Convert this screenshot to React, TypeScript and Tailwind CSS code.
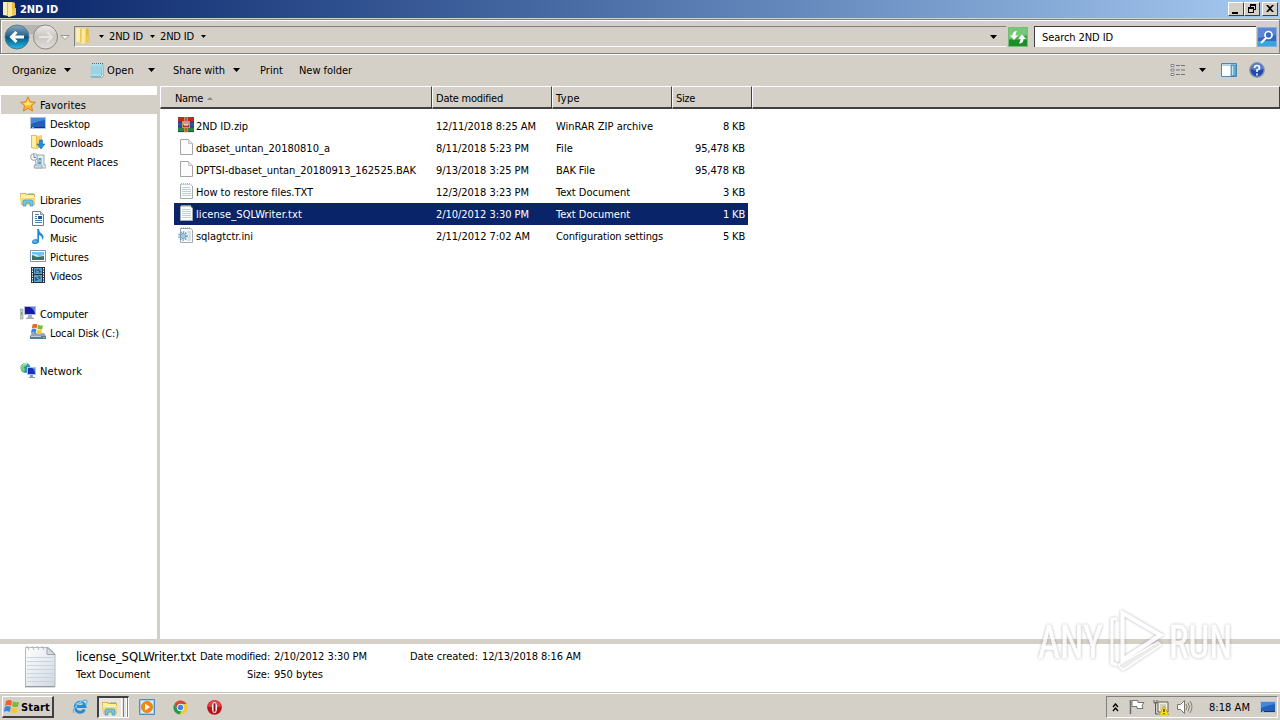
import { useLayoutEffect, useRef, useState } from "react";
import type { ReactNode } from "react";
import clsx from "clsx";

type TextProps = {
  w: number;
  children: string;
  className?: string;
};

// Spreads the letters so that the label takes exactly w pixels
function Text({ w, children, className }: TextProps) {
  const ref = useRef<HTMLSpanElement>(null);
  const [spacing, setSpacing] = useState(0);

  useLayoutEffect(() => {
    if (!ref.current) return;
    const natural = ref.current.getBoundingClientRect().width;
    setSpacing((w - natural) / children.length);
  }, [w, children]);

  return (
    <span
      ref={ref}
      className={clsx("inline-block shrink-0 pt-0.5 whitespace-pre", className)}
      style={{ letterSpacing: `${spacing}px` }}
    >
      {children}
    </span>
  );
}

function Icon({ children, className = "h-4 w-4" }: { children: ReactNode; className?: string }) {
  return (
    <svg viewBox="0 0 16 16" className={clsx("block shrink-0", className)}>
      {children}
    </svg>
  );
}

function Arrow({ className }: { className?: string }) {
  return (
    <svg viewBox="0 0 7 4" className={clsx("block h-1 w-[7px] shrink-0", className)}>
      <path d="M0 0h7L3.5 4z" fill="#000" />
    </svg>
  );
}

function SmallArrow({ className }: { className?: string }) {
  return (
    <svg viewBox="0 0 5 3" className={clsx("block h-[3px] w-[5px] shrink-0", className)}>
      <path d="M0 0h5L2.5 3z" fill="#000" />
    </svg>
  );
}

function FolderIcon({ className }: { className?: string }) {
  return (
    <Icon className={className}>
      <path d="M1 1h7l1 1v12l-3 1-5-1z" fill="#f3d774" />
      <path d="M1 1h4v13H1z" fill="#fbeeb0" />
      <path d="M6 2l5-1 2 1v12l-6 2z" fill="#e6bb45" />
      <path d="M6 2l4-1v14l-4 1z" fill="#fdeb9c" />
      <path d="M10 8l4-1v7l-4 1z" fill="#edc958" />
      <path d="M5.500 2v12" stroke="#caa445" strokeWidth=".6" />
    </Icon>
  );
}

function NotepadIcon() {
  return (
    <Icon>
      <path d="M3 2h11v11l-2 2H1.500z" fill="#75b8cf" />
      <path d="M3 2h10l-1 12H1.500z" fill="#a9deed" />
      <path d="M2.500 5h10M2.300 7h10M2 9h10M2 11h10" stroke="#76b7cf" strokeWidth=".5" />
      <path d="M3 1.500h11" stroke="#536c75" strokeDasharray="1 1" />
      <path d="M14 3v10l-2 2" stroke="#f5faff" fill="none" />
      <path d="M14.500 3v11l-1 1.500H2" stroke="#8b9a9e" strokeWidth=".6" fill="none" />
    </Icon>
  );
}

function StarIcon() {
  return (
    <Icon>
      <path
        d="M8 .8l2.200 4.900 5.200.6-3.900 3.500 1.100 5.300L8 12.400l-4.600 2.700 1.100-5.300L.6 6.300l5.200-.6z"
        fill="#fbb62c"
        stroke="#d97c20"
        strokeWidth=".9"
      />
      <path d="M8 3l1.500 3.700 3.500.5-3 1.800-4 .5-3-2.300 3.500-.5z" fill="#ffe573" />
    </Icon>
  );
}

function DesktopIcon() {
  return (
    <Icon>
      <path d="M0 2h16v12H0z" fill="#b1c4dc" />
      <path d="M1 3h14v10H1z" fill="#2361b8" />
      <path d="M1 3h14v2Q8 6 1 9z" fill="#4488d8" />
      <path d="M1 12h14v1H1z" fill="#17355e" />
      <path d="M2 12h2v1H2z" fill="#65cc6a" />
    </Icon>
  );
}

function DownloadsIcon() {
  return (
    <Icon>
      <path d="M1 1h5l2 1v11l-2 2-5-1z" fill="#e6bd4e" />
      <path d="M2 2h4v12l-4-1z" fill="#fff0a7" />
      <path d="M7 2l5-1v12l-5 2z" fill="#f2d26b" />
      <path d="M9.500 6h3v4h2.500l-4 5-4-5h2.500z" fill="#258edb" stroke="#1668ab" strokeWidth=".6" />
    </Icon>
  );
}

function RecentIcon() {
  return (
    <Icon>
      <path d="M5 2h9v10h2v3H5v-3h1z" fill="#e5eff4" stroke="#84949d" strokeWidth=".8" />
      <path d="M7 6h5M7 8h5M7 10h5" stroke="#6998ba" />
      <path d="M9 5h2v2H9zM8 9h3v2H8z" fill="#5ca2d0" />
      <circle cx="4" cy="4" r="3.400" fill="#edf4f7" stroke="#8294a0" strokeWidth=".8" />
      <path d="M4 1.500V4.500h2" stroke="#577080" fill="none" strokeWidth=".8" />
      <path d="M4 12h8v3H4z" fill="#ccd9df" stroke="#84949d" strokeWidth=".6" />
    </Icon>
  );
}

function LibrariesIcon({ className }: { className?: string }) {
  return (
    <Icon className={className}>
      <path d="M0 2h6l1 1h8v11H1z" fill="#d9b44b" />
      <path d="M1 3h4l1 1h8v5H1z" fill="#fff0a0" />
      <path d="M8 3h6" stroke="#6eab70" />
      <path d="M.5 6h15l-1 8h-13z" fill="#f5d978" />
      <path d="M1 6.500h14" stroke="#fff3bd" />
      <path d="M3 15v-4q0-2 2-2h6q2 0 2 2v4h-3v-3H6v3z" fill="#72c6e9" stroke="#3e94c1" strokeWidth=".7" />
    </Icon>
  );
}

function DocumentsIcon() {
  return (
    <Icon>
      <path d="M2.500 1.500h8l3 3v11h-11z" fill="#fff" stroke="#6b7c8e" />
      <path d="M10.500 1.500v3h3" fill="#d2dfed" stroke="#6b7c8e" strokeWidth=".8" />
      <path d="M5 4.500h4M5 6.500h2M5 8.500h2M5 10.500h7M5 12.500h7" stroke="#4d80b4" />
      <path d="M8 6h4v3H8z" fill="#29578c" />
    </Icon>
  );
}

function MusicIcon() {
  return (
    <Icon>
      <path d="M7 0h2q0 3 3 5 3 3 0 6 .5-4-3-5v6q0 3-4 3-3 0-3-2 0-3 5-3z" fill="#2289d1" />
      <path d="M7.500 1v10" stroke="#78c6f0" strokeWidth=".7" />
      <ellipse cx="5" cy="12.500" rx="2" ry="1.300" fill="#65bbeb" />
    </Icon>
  );
}

function PicturesIcon() {
  return (
    <Icon>
      <path d="M.5 2.500h15v11H.5z" fill="#fff" stroke="#8097ab" />
      <path d="M2 4h12v8H2z" fill="#70c3ed" />
      <path d="M2 6q5 0 7 2l5-1v2H2z" fill="#c9e8f1" />
      <path d="M2 7l5 2 7-1v4H2z" fill="#34775f" />
      <path d="M2 11h12v1H2z" fill="#2c709e" />
    </Icon>
  );
}

function VideosIcon() {
  return (
    <Icon>
      <path d="M1 0h14v16H1z" fill="#27323e" />
      <path d="M2.500 1v14M13.500 1v14" stroke="#eef5f8" strokeDasharray="1.500 1" />
      <path d="M4 1h8v6H4zM4 8h8v7H4z" fill="#4da2d5" />
      <path d="M5 2l2 1 2-1 2 3-2 1-2-1-2 1zM5 10l2 1 2-2 2 2-3 2-3 1z" fill="#285985" />
      <path d="M6 4l3 1M7 11l2 1" stroke="#d69562" />
    </Icon>
  );
}

function ComputerIcon() {
  return (
    <Icon>
      <path d="M0 4h3v10H0z" fill="#c0cec7" stroke="#77897c" strokeWidth=".5" />
      <path d="M1 7h1v3H1z" fill="#64ba51" />
      <path d="M4 1h12v9H4z" fill="#b8bed1" />
      <path d="M5 2h10v7H5z" fill="#1519a3" />
      <path d="M10 2h5v7q-1-5-5-7z" fill="#6482df" />
      <path d="M8 10h4v2l2 1v1H6v-1l2-1z" fill="#a5adbc" />
    </Icon>
  );
}

function WindowsFlag() {
  return (
    <g>
      <path d="M2 2q3-2 6 0L7 7Q4 5 1 7z" fill="#ef6229" />
      <path d="M9 2.300q3 1.700 6 .4l-1 5q-3 1-6-.5z" fill="#7fba36" />
      <path d="M.8 8q3-2 6 0l-1 5q-3-2-6-.2z" fill="#3986dc" />
      <path d="M7.800 8.300q3 1.500 6 .4l-1 5q-3 1-6-.5z" fill="#fac732" />
    </g>
  );
}

function DiskIcon() {
  return (
    <Icon>
      <path d="M2 9h12l2 3v3H0v-3z" fill="#8ea6b5" />
      <path d="M0 12h16v3H0z" fill="#587d92" />
      <path d="M1 12h10v1H1z" fill="#b9d0d8" />
      <path d="M13 13h2v1h-2z" fill="#66d35a" />
      <g transform="translate(1 -1) scale(.8)">
        <WindowsFlag />
      </g>
    </Icon>
  );
}

function NetworkIcon() {
  return (
    <Icon>
      <circle cx="5.500" cy="6" r="5" fill="#2b91ba" />
      <path d="M1 4q3-4 7-3L6 4 4 5l1 3-2 2Q0 7 1 4z" fill="#7bd26b" />
      <path d="M3 3q2-2 4-1" stroke="#d3f2f4" fill="none" />
      <path d="M7 5h9v8H7z" fill="#b2c2df" />
      <path d="M8 6h7v6H8z" fill="#1930b8" />
      <path d="M12 6h3v6q0-4-3-6z" fill="#658ee8" />
      <path d="M10 13h3v2h2v1H9v-1h1z" fill="#849ab6" />
    </Icon>
  );
}

function RarIcon() {
  return (
    <Icon>
      <path d="M0 0h16v5H0z" fill="#bd272f" />
      <path d="M0 5h16v5H0z" fill="#3054a5" />
      <path d="M0 10h16v5H0z" fill="#298342" />
      <path d="M0 5h16M0 10h16M0 14.700h16" stroke="#1b2631" strokeWidth=".6" />
      <path d="M6 0h4v15H6z" fill="#ad6528" />
      <path d="M6.500 0v15M9.500 0v15" stroke="#d99a45" strokeWidth=".7" />
      <path d="M4 4h8v7H4z" fill="#c29b62" />
      <path d="M5 5h6v5H5z" fill="#b32937" />
      <path d="M6 5v3h4V5M8 5v3" stroke="#fff" fill="none" />
    </Icon>
  );
}

function BlankIcon() {
  return (
    <Icon>
      <path d="M2.500.5h8l4 4v11h-12z" fill="#fcfcfc" stroke="#a2a4a4" />
      <path d="M10.500.5v4h4" fill="#e2e7e9" stroke="#b5b9ba" strokeWidth=".8" />
    </Icon>
  );
}

function TextFileIcon() {
  return (
    <Icon>
      <path d="M2.500 1.500h10L14.500 3v12.500h-12z" fill="#fbfdfd" stroke="#a2aaad" />
      <path d="M3 1h10" stroke="#fff" />
      <path d="M3 .8h10" stroke="#8a9498" strokeDasharray="1 1" />
      <path d="M4 4.500h8M4 6.500h9M4 8.500h9M4 10.500h9M4 12.500h9" stroke="#c0d0d6" />
    </Icon>
  );
}

function IniIcon() {
  return (
    <Icon>
      <path d="M2.500 1.500h10L14.500 3v12.500h-12z" fill="#fbfdfd" stroke="#a2aaad" />
      <path d="M3 1h10" stroke="#848b8e" strokeDasharray="1 1" />
      <path d="M9 5h4M10 7h3M11 9h2M10 11h3M9 13h4" stroke="#b4c7ce" />
      <circle cx="5" cy="9" r="4" fill="none" stroke="#5d99c4" strokeWidth="1.500" strokeDasharray="1.500 1.100" />
      <circle cx="5" cy="9" r="2.500" fill="#c4e0f1" stroke="#609bc3" />
      <circle cx="5" cy="9" r="1" fill="#fff" stroke="#557da0" strokeWidth=".5" />
    </Icon>
  );
}

const places = [
  { name: "Favorites", w: 46, icon: <StarIcon />, root: true, active: true },
  { name: "Desktop", w: 40, icon: <DesktopIcon /> },
  { name: "Downloads", w: 53, icon: <DownloadsIcon /> },
  { name: "Recent Places", w: 68, icon: <RecentIcon /> },
  null,
  { name: "Libraries", w: 41, icon: <LibrariesIcon />, root: true },
  { name: "Documents", w: 54, icon: <DocumentsIcon /> },
  { name: "Music", w: 27, icon: <MusicIcon /> },
  { name: "Pictures", w: 39, icon: <PicturesIcon /> },
  { name: "Videos", w: 32, icon: <VideosIcon /> },
  null,
  { name: "Computer", w: 48, icon: <ComputerIcon />, root: true },
  { name: "Local Disk (C:)", w: 69, icon: <DiskIcon /> },
  null,
  { name: "Network", w: 42, icon: <NetworkIcon />, root: true },
];

const files = [
  { name: "2ND ID.zip", nw: 52, date: "12/11/2018 8:25 AM", dw: 100, type: "WinRAR ZIP archive", tw: 97, size: "8 KB", sw: 22, icon: <RarIcon /> },
  { name: "dbaset_untan_20180810_a", nw: 134, date: "8/11/2018 5:23 PM", dw: 93, type: "File", tw: 17, size: "95,478 KB", sw: 50, icon: <BlankIcon /> },
  { name: "DPTSI-dbaset_untan_20180913_162525.BAK", nw: 220, date: "9/13/2018 3:25 PM", dw: 93, type: "BAK File", tw: 39, size: "95,478 KB", sw: 50, icon: <BlankIcon /> },
  { name: "How to restore files.TXT", nw: 117, date: "12/3/2018 3:23 PM", dw: 93, type: "Text Document", tw: 74, size: "3 KB", sw: 22, icon: <TextFileIcon /> },
  { name: "license_SQLWriter.txt", nw: 106, date: "2/10/2012 3:30 PM", dw: 93, type: "Text Document", tw: 74, size: "1 KB", sw: 22, icon: <TextFileIcon />, selected: true },
  { name: "sqlagtctr.ini", nw: 57, date: "2/11/2012 7:02 AM", dw: 94, type: "Configuration settings", tw: 107, size: "5 KB", sw: 22, icon: <IniIcon /> },
];

function CaptionButton({ children }: { children: ReactNode }) {
  return (
    <div className="h-[14px] w-4 border border-t-white border-l-white border-r-[#404040] border-b-[#404040] bg-[#d4d0c8]">
      <svg viewBox="0 0 14 12" className="block h-3 w-3.5" shapeRendering="crispEdges">
        {children}
      </svg>
    </div>
  );
}

function TitleBar() {
  return (
    <div className="flex h-[18px] items-center bg-linear-to-r from-[#0a246a] to-[#a6caf0] pr-0.5 pl-0.5">
      <FolderIcon />
      <Text w={38} className="ml-0.5 font-bold text-white">2ND ID</Text>
      <div className="ml-auto flex">
        <CaptionButton>
          <path d="M3 9h6v2H3z" />
        </CaptionButton>
        <CaptionButton>
          <path d="M5 1h6v2H5zM5 3h1v2H5zM10 3h1v4h-1zM8 6h2v1H8zM3 4h6v2H3zM3 6h1v4H3zM8 6h1v4H8zM3 9h6v1H3z" />
        </CaptionButton>
        <div className="ml-0.5">
          <CaptionButton>
            <path d="M3 2h2l2 2 2-2h2L8 5.500 11 9H9L7 7 5 9H3l3-3.500z" shapeRendering="auto" />
          </CaptionButton>
        </div>
      </div>
    </div>
  );
}

function NavButtons() {
  return (
    <svg viewBox="0 0 68 28" className="block h-7 w-[68px] shrink-0">
      <defs>
        <linearGradient id="back" x2="0" y2="1">
          <stop stopColor="#8ca9ba" />
          <stop offset=".45" stopColor="#246790" />
          <stop offset=".5" stopColor="#07517e" />
          <stop offset="1" stopColor="#20bee9" />
        </linearGradient>
        <linearGradient id="forward" x2="0" y2="1">
          <stop stopColor="#eceae7" />
          <stop offset=".5" stopColor="#c9c5c1" />
          <stop offset="1" stopColor="#e3dfda" />
        </linearGradient>
      </defs>
      <path d="M14 2h32v5q-16 9-32 0z" fill="#b6b5b2" />
      <circle cx="15" cy="14" r="12" fill="url(#back)" stroke="#55788d" />
      <path d="M9 14h13M14.500 9l-5 5 5 5" stroke="#fff" strokeWidth="3" fill="none" />
      <circle cx="43.500" cy="14" r="12" fill="url(#forward)" stroke="#8c8a87" />
      <path d="M37 14h13M45 9l5 5-5 5" stroke="#e8e5e1" strokeWidth="2" fill="none" />
      <path d="M59 12.500h8L63 16.500z" fill="#f8f8f8" stroke="#898782" strokeWidth=".8" />
    </svg>
  );
}

function AddressBar() {
  return (
    <div className="mt-px flex h-[35px] items-center border border-[#808080] bg-[#d4d0c8] pl-px shadow-[inset_1px_1px_0_#fff]">
      <NavButtons />
      <div className="ml-1 flex h-[21px] w-[932px] items-center border-t border-b border-l border-t-[#808080] border-b-white border-l-[#808080]">
        <FolderIcon className="-mt-0.5 h-[17px] w-[17px]" />
        <SmallArrow className="ml-[7px]" />
        <Text w={34} className="-mt-0.5 ml-[5px]">2ND ID</Text>
        <SmallArrow className="ml-[7px]" />
        <Text w={34} className="-mt-0.5 ml-[5px]">2ND ID</Text>
        <SmallArrow className="ml-[7px]" />
        <Arrow className="mr-[9px] ml-auto" />
      </div>
      <svg viewBox="0 0 20 20" className="ml-0.5 block h-5 w-5 shrink-0">
        <path d="M.5.5h19v19H.5z" fill="#43a748" stroke="#75bd78" />
        <path d="M1 1h18v7L1 12z" fill="#74c878" />
        <path d="M1 13h18v6H1z" fill="#1d8d26" />
        <path d="M9 4Q4.500 4 4.500 8.500H2L6 13l4-4.500H7.500Q7.500 6 9 4z" fill="#fff" />
        <path d="M11 16.500q4.500 0 4.500-4.500H18l-4-4.500L10 12h2.500q0 2.500-1.500 4.500z" fill="#fff" />
      </svg>
      <div className="ml-1.5 flex h-[21px] w-[222px] items-center border-t border-l border-[#404040] bg-white pl-[7px]">
        <Text w={71}>Search 2ND ID</Text>
      </div>
      <svg viewBox="0 0 20 20" className="ml-px block h-5 w-5 shrink-0">
        <path d="M.5.5h19v19H.5z" fill="#3864c4" stroke="#8aa9df" />
        <path d="M1 1h18v7L1 11z" fill="#5e84d8" />
        <path d="M1 14h18v5H1z" fill="#36a6dd" />
        <circle cx="11.500" cy="8" r="3.500" fill="#3667c8" stroke="#fff" strokeWidth="1.700" />
        <path d="M9 11l-5 5" stroke="#fff" strokeWidth="2.200" />
      </svg>
    </div>
  );
}

function Toolbar() {
  return (
    <div className="flex h-8 items-center border-t border-white bg-[#d4d0c8] pb-0.5 pl-3">
      <Text w={44}>Organize</Text>
      <Arrow className="ml-2" />
      <div className="ml-[18px]"><NotepadIcon /></div>
      <Text w={27} className="ml-0.5">Open</Text>
      <Arrow className="ml-[14px]" />
      <Text w={52} className="ml-[18px]">Share with</Text>
      <Arrow className="ml-2" />
      <Text w={23} className="ml-5">Print</Text>
      <Text w={53} className="ml-4">New folder</Text>
      <svg viewBox="0 0 16 14" className="ml-auto block h-3.5 w-4 shrink-0">
        <path d="M1 1.500h3v2H1zM1 6h3v2H1zM1 10.500h3v2H1z" fill="#fff" stroke="#7d8287" />
        <path d="M6 2.500h4m1 0h4M6 7h4m1 0h4M6 11.500h4m1 0h4" stroke="#6b747b" />
      </svg>
      <Arrow className="ml-[13px]" />
      <svg viewBox="0 0 16 14" className="ml-[15px] block h-3.5 w-4 shrink-0">
        <path d="M.5.500h15v13H.5z" fill="#fff" stroke="#4e87ad" />
        <path d="M1 1h14v2H1z" fill="#b6d5e7" />
        <path d="M10 2h5v11h-5z" fill="#69b6d9" stroke="#397fa6" strokeWidth=".7" />
        <path d="M11 3h1v9h-1z" fill="#c3e9f6" />
      </svg>
      <Icon className="mr-[15px] ml-3 h-4 w-4">
        <circle cx="8" cy="8" r="7.200" fill="#2149ad" stroke="#8d96a9" strokeWidth="1.400" />
        <path d="M2 7a6 6 0 0 1 12 0q-6 3-12 0z" fill="#557dcc" />
        <path d="M5.500 6q0-2.500 2.500-2.500T10.500 6Q10.500 7.500 8 8v2M8 11.500v2" stroke="#fff" strokeWidth="1.600" fill="none" />
      </Icon>
    </div>
  );
}

function Sidebar() {
  return (
    <div className="w-[160px] shrink-0 border-r-[3px] border-[#d4d0c8] bg-white pt-[9px] pl-px">
      {places.map((place, i) =>
        place ? (
          <div
            key={place.name}
            className={clsx("flex h-[19px] items-center", place.root ? "pl-[19px]" : "pl-[29px]", place.active && "bg-[#d4d0c8]")}
          >
            <div className="-mt-0.5">{place.icon}</div>
            <Text w={place.w} className="ml-1">{place.name}</Text>
          </div>
        ) : (
          <div key={i} className="h-[19px]" />
        ),
      )}
    </div>
  );
}

const headCell =
  "flex h-full shrink-0 items-center border-t border-l border-r border-b-2 border-t-white border-l-white border-r-[#404040] border-b-[#404040] pt-0.5";

function FileList() {
  return (
    <div className="min-w-0 flex-1 bg-white">
      <div className="flex h-[23px] bg-[#d4d0c8]">
        <div className={clsx(headCell, "w-[272px] pl-3.5")}>
          <Text w={28}>Name</Text>
          <svg viewBox="0 0 6 3" className="ml-1 block h-[3px] w-1.5">
            <path d="M0 3h6L3 0z" fill="#8d8983" />
          </svg>
        </div>
        <div className={clsx(headCell, "w-[120px] pl-[3px]")}><Text w={67}>Date modified</Text></div>
        <div className={clsx(headCell, "w-[120px] pl-[3px]")}><Text w={24}>Type</Text></div>
        <div className={clsx(headCell, "w-[80px] pl-[3px]")}><Text w={19}>Size</Text></div>
        <div className={clsx(headCell, "w-[528px]")} />
      </div>
      <div className="w-[588px] pt-1.5 pl-3.5">
        {files.map((file) => (
          <div
            key={file.name}
            className={clsx("flex h-[22px] items-center pr-[3px] pl-1", file.selected && "bg-[#0a246a] text-white")}
          >
            <div className="-mt-0.5 mr-0.5">{file.icon}</div>
            <div className="flex w-60"><Text w={file.nw}>{file.name}</Text></div>
            <div className="flex w-[120px]"><Text w={file.dw}>{file.date}</Text></div>
            <div className="flex flex-1"><Text w={file.tw}>{file.type}</Text></div>
            <Text w={file.sw}>{file.size}</Text>
          </div>
        ))}
      </div>
    </div>
  );
}

function DetailsPane() {
  return (
    <div className="flex h-[54px] border-t-[5px] border-b border-t-[#d4d0c8] border-b-[#c4c1bb] bg-white">
      <svg viewBox="0 0 32 42" className="mt-0.5 ml-6 block h-[42px] w-8 shrink-0">
        <defs>
          <linearGradient id="sheet" x2="1" y2="1">
            <stop stopColor="#fff" />
            <stop offset="1" stopColor="#d0d8e2" />
          </linearGradient>
        </defs>
        <path d="M1.500 1.500h23L31 8v32.500H1.500z" fill="url(#sheet)" stroke="#b3b8ba" />
        <path d="M23 1.500v7h8z" fill="#d8dcde" stroke="#8f9598" strokeWidth=".8" />
        <path d="M3 11.500h26M3 15.500h26M3 19.500h26M3 23.500h26M3 27.500h26M3 31.500h26M3 35.500h26" stroke="#c3ced8" strokeWidth=".8" />
        <path d="M3 0l2 4M8 0l2 4M13 0l2 4M18 0l2 4" stroke="#b2b8bb" />
        <path d="M1 40.800h30" stroke="#8b9092" />
      </svg>
      <div className="mt-[3px] ml-5 flex flex-col">
        <div className="flex h-[18px] items-center">
          <Text w={120} className="text-[13px]">license_SQLWriter.txt</Text>
          <Text w={70} className="ml-1">Date modified:</Text>
          <Text w={93} className="ml-1">2/10/2012 3:30 PM</Text>
          <Text w={68} className="ml-[43px]">Date created:</Text>
          <Text w={99} className="ml-1">12/13/2018 8:16 AM</Text>
        </div>
        <div className="flex h-[18px] items-center">
          <Text w={74}>Text Document</Text>
          <Text w={23} className="ml-[97px]">Size:</Text>
          <Text w={49} className="ml-1">950 bytes</Text>
        </div>
      </div>
    </div>
  );
}

function Taskbar() {
  return (
    <div className="flex h-[27px] items-center border-t border-white bg-[#d4d0c8] pl-0.5">
      <div className="flex h-[22px] w-[52px] items-center border-t border-r-2 border-b-2 border-l border-t-white border-r-[#404040] border-b-[#404040] border-l-white pl-px">
        <Icon><WindowsFlag /></Icon>
        <Text w={29} className="ml-px font-bold">Start</Text>
      </div>
      <Icon className="ml-[18px] h-4 w-4">
        <path d="M12.500 10.500A5 5 0 1 1 13 7.500H5" fill="none" stroke="#268bd2" strokeWidth="2.800" />
        <path d="M2 14Q0 12 4 7q5-6 10-6 2 1 0 5" fill="none" stroke="#74bce7" strokeWidth="1.400" />
        <path d="M4 5Q8 2 11 5" fill="none" stroke="#a2ddfa" />
      </Icon>
      <div className="ml-[9px] flex h-[22px] w-8 items-center border-t-2 border-r border-b border-l-2 border-t-[#404040] border-r-white border-b-white border-l-[#404040] bg-[#e8e5e0] pl-0.5">
        <LibrariesIcon className="h-4 w-[18px]" />
        <div className="ml-0.5 h-full w-[3px] border-r border-l border-r-[#808080] border-l-white" />
        <div className="ml-0.5 h-full w-[3px] border-r border-l border-r-[#808080] border-l-white" />
      </div>
      <Icon className="ml-2.5 h-4 w-4">
        <path d="M.5.500h15v15H.5z" fill="#a5cce7" stroke="#4c8fc5" />
        <path d="M2 2h12v12H2z" fill="#def0fa" />
        <circle cx="8" cy="8" r="5.700" fill="#f4860b" stroke="#bc6f23" strokeWidth=".5" />
        <path d="M6 4.500l5 3.500-5 3.500z" fill="#fff" />
      </Icon>
      <Icon className="ml-[18px] h-[15px] w-[15px]">
        <circle cx="8" cy="8" r="7.500" fill="#f4c934" />
        <path d="M1.500 4.250A7.500 7.500 0 0 1 14.500 4.250H8A3.750 3.750 0 0 0 4.700 9.700z" fill="#db4537" />
        <path d="M1.500 4.250L5 10a3.750 3.750 0 0 0 4 1.600L7 15.500A7.500 7.500 0 0 1 1.500 4.250z" fill="#259b58" />
        <circle cx="8" cy="8" r="3.500" fill="#3c83e5" stroke="#fff" />
      </Icon>
      <Icon className="ml-[19px] h-[15px] w-[15px]">
        <circle cx="8" cy="8" r="7.800" fill="#ba1016" />
        <path d="M1 7a7 7 0 0 1 14 0q-7 2-14 0z" fill="#df4447" />
        <path d="M6.500 2.500h3l1.200 3v5l-1.200 3h-3l-1.200-3v-5z" fill="#f6eded" />
        <path d="M7 3.500h2v9H7z" fill="#871016" />
      </Icon>
      <div className="mr-0.5 ml-auto flex h-[22px] w-[172px] items-center border-t border-r border-b border-l border-t-[#808080] border-r-white border-b-white border-l-[#808080] pl-[5px]">
        <svg viewBox="0 0 7 9" className="block h-[9px] w-[7px]">
          <path d="M1 4l2.500-3L6 4M1 8l2.500-3L6 8" fill="none" stroke="#000" strokeWidth="1.400" />
        </svg>
        <Icon className="ml-2.5 h-4 w-4">
          <path d="M1.500 1v14" stroke="#6b6b68" strokeWidth="1.500" />
          <path d="M3 1.500h6v2h6l-2 3 1 3H8v-2H3z" fill="#fff" stroke="#777571" />
        </Icon>
        <Icon className="ml-2 h-4 w-4">
          <path d="M5 3h10v10H5z" fill="#f1eeda" stroke="#625f55" />
          <path d="M7 5h6v6H7z" fill="#d2cfbd" />
          <path d="M2.500 5v10h3M1 1v3h3V1M2.500 3v3" fill="none" stroke="#575a55" />
          <path d="M11 7l5 9H6z" fill="#ffdc26" stroke="#a78910" strokeWidth=".6" />
          <path d="M11 10v3M11 14v1" stroke="#000" />
        </Icon>
        <Icon className="ml-2 h-4 w-4">
          <path d="M.5 5.500h3l4-4v13l-4-4h-3z" fill="#fff" stroke="#77746f" />
          <path d="M9 5q2 3 0 6M11 3.500q3 4.500 0 9M13 2q4 6 0 12" fill="none" stroke="#858079" />
        </Icon>
        <Text w={41} className="ml-4">8:18 AM</Text>
        <div className="ml-2.5"><DesktopIcon /></div>
      </div>
    </div>
  );
}

function Watermark() {
  return (
    <svg viewBox="0 0 246 76" className="pointer-events-none absolute top-[602px] left-[1034px] h-[76px] w-[246px] opacity-80">
      <defs>
        <filter id="halo" x="-10%" y="-10%" width="120%" height="120%">
          <feDropShadow dx="0" dy="0" stdDeviation="1.800" floodColor="#777" floodOpacity=".75" />
        </filter>
      </defs>
      <g filter="url(#halo)" fill="#fff" stroke="#fff" fontFamily="Roboto, sans-serif" fontSize="46">
        <text x="4" y="56" strokeWidth=".5" textLength="65" lengthAdjust="spacingAndGlyphs">ANY</text>
        <text x="135" y="56" strokeWidth=".5" textLength="63" lengthAdjust="spacingAndGlyphs">RUN</text>
        <path d="M83 17h-5v44l5 2" fill="none" strokeWidth="3" />
        <path d="M88.500 58V11l38 22z" fill="none" strokeWidth="4" />
        <path d="M84 63l40-23 3 3-38 25z" fill="#fff" fillOpacity=".4" strokeWidth="1.500" />
      </g>
    </svg>
  );
}

export default function App() {
  return (
    <div className="relative flex h-[720px] w-[1280px] flex-col overflow-hidden bg-[#d4d0c8] font-['DejaVu_Sans_Condensed','DejaVu_Sans',sans-serif] text-[11px] leading-[14px] text-black [font-stretch:semi-condensed]">
      <TitleBar />
      <AddressBar />
      <Toolbar />
      <div className="flex min-h-0 flex-1">
        <Sidebar />
        <FileList />
      </div>
      <DetailsPane />
      <Taskbar />
      <Watermark />
    </div>
  );
}
